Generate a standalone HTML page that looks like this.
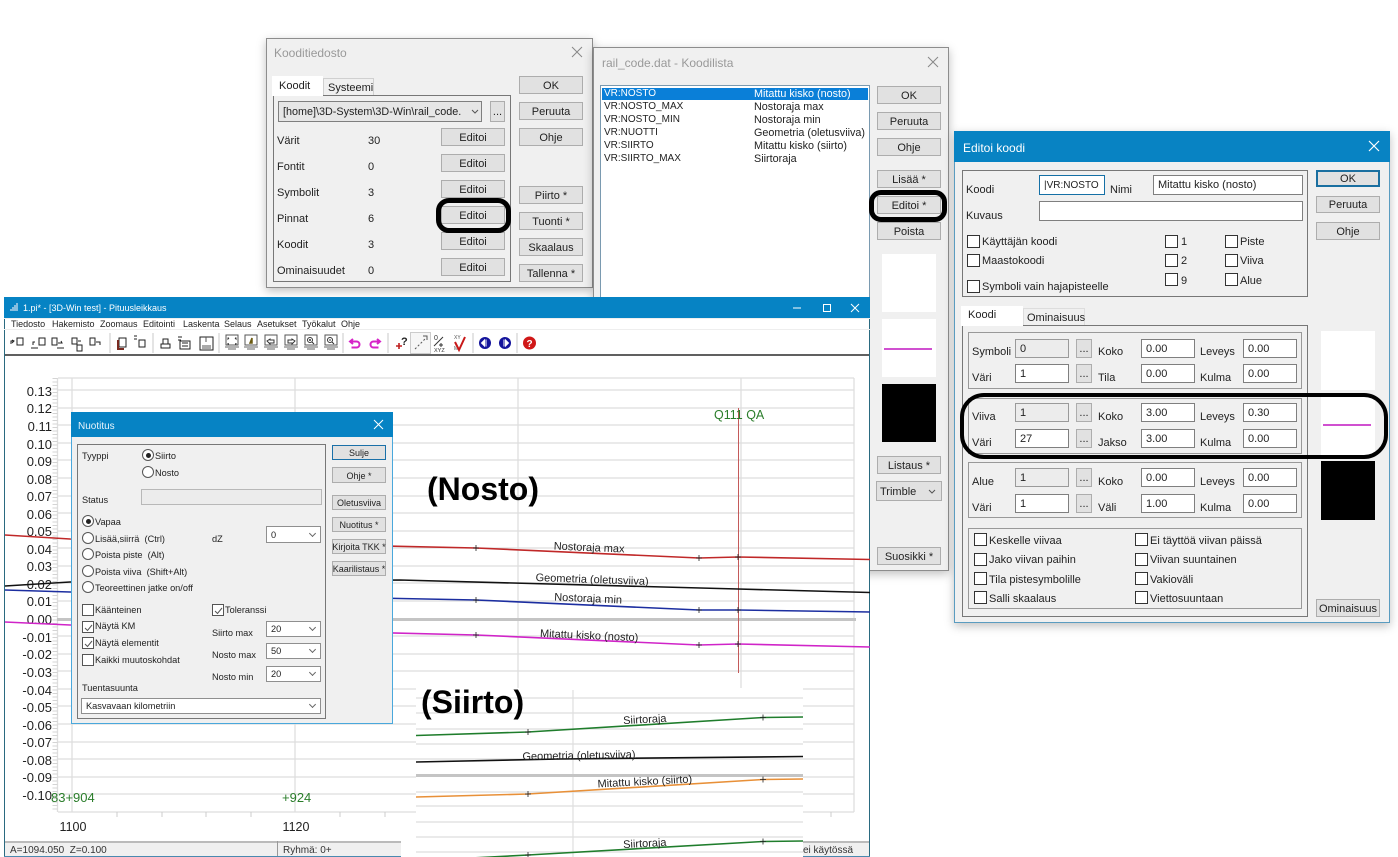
<!DOCTYPE html>
<html><head><meta charset="utf-8"><title>3D-Win</title>
<style>
html,body{margin:0;padding:0;background:#fff;width:1398px;height:857px;overflow:hidden}
body{position:relative;font:11px "Liberation Sans",sans-serif;color:#222}
div,span{position:absolute;box-sizing:border-box}
.t{white-space:pre;line-height:14px;height:14px;margin-top:1px}
.m0{margin-top:0}
.b{background:#e1e1e1;border:1px solid #adadad;text-align:center;white-space:pre;display:flex;align-items:center;justify-content:center;padding-top:1px}
.d{background:#f0f0f0;border:1px solid #8d8d8d;box-shadow:0 3px 9px rgba(0,0,0,.25)}
.g{border:1px solid #777}
.gl{border:1px solid #999}
.i{background:#fff;border:1px solid #7f7f7f;white-space:pre;padding-left:4px;display:flex;align-items:center}
.ig{background:#ececec;border:1px solid #9a9a9a;white-space:pre;padding-left:4px;display:flex;align-items:center}
.c{width:13px;height:13px;background:#fff;border:1px solid #333}
.ck{width:12px;height:12px;background:#fff;border:1px solid #555}
.ck svg{position:absolute;left:1px;top:1px}
.r{width:12px;height:12px;background:#fff;border:1px solid #555;border-radius:50%}
.r i{position:absolute;left:2.5px;top:2.5px;width:5px;height:5px;background:#222;border-radius:50%}
.ov{border:5px solid #000;background:transparent}
.tt{font-size:12px;color:#999;margin-top:0}
svg.f{position:absolute;left:0;top:0}
.cb{background:#fff;border:1px solid #8f8f8f;white-space:pre;padding-left:4px;display:flex;align-items:center;font-size:9.2px}
.cb:after{content:"";position:absolute;right:5px;top:50%;width:4px;height:4px;border-right:1px solid #666;border-bottom:1px solid #666;transform:translateY(-4px) rotate(45deg)}
.n{font-size:9.2px}
.b.n{font-size:9px}
.me{font-size:9px;margin-top:0}
</style></head><body>

<!-- Kooditiedosto -->
<div class="d" style="left:266px;top:38px;width:327px;height:250px"></div>
<div class="t tt" style="left:274px;top:46px">Kooditiedosto</div>
<svg class="f" width="1398" height="300" style="z-index:1"><path d="M572 47l10 10M582 47l-10 10M928 57l10 10M938 57l-10 10" stroke="#888" fill="none"/></svg>
<div class="t m0" style="left:323px;top:78px;width:51px;height:18px;background:#f0f0f0;border:1px solid #d0d0d0;padding:2px 0 0 4px">Systeemi</div>
<div class="g" style="left:273px;top:95px;width:238px;height:187px"></div>
<div class="t m0" style="left:272px;top:76px;width:51px;height:20px;background:#fff;padding:2px 0 0 7px;line-height:16px">Koodit</div>
<div class="i" style="left:278px;top:101px;width:204px;height:21px;background:#e6e6e6;font-size:10.8px">[home]\3D-System\3D-Win\rail_code.</div>
<svg class="f" width="500" height="120" style="z-index:1"><path d="M472 110l3 3 3-3" stroke="#555" fill="none"/></svg>
<div class="b" style="left:490px;top:101px;width:15px;height:21px">...</div>
<div class="t" style="left:277px;top:133px">Värit</div><div class="t" style="left:368px;top:133px">30</div>
<div class="t" style="left:277px;top:159px">Fontit</div><div class="t" style="left:368px;top:159px">0</div>
<div class="t" style="left:277px;top:185px">Symbolit</div><div class="t" style="left:368px;top:185px">3</div>
<div class="t" style="left:277px;top:211px">Pinnat</div><div class="t" style="left:368px;top:211px">6</div>
<div class="t" style="left:277px;top:237px">Koodit</div><div class="t" style="left:368px;top:237px">3</div>
<div class="t" style="left:277px;top:263px">Ominaisuudet</div><div class="t" style="left:368px;top:263px">0</div>
<div class="b" style="left:441px;top:128px;width:64px;height:18px">Editoi</div>
<div class="b" style="left:441px;top:154px;width:64px;height:18px">Editoi</div>
<div class="b" style="left:441px;top:180px;width:64px;height:18px">Editoi</div>
<div class="b" style="left:441px;top:206px;width:64px;height:18px">Editoi</div>
<div class="b" style="left:441px;top:232px;width:64px;height:18px">Editoi</div>
<div class="b" style="left:441px;top:258px;width:64px;height:18px">Editoi</div>
<div class="b" style="left:519px;top:76px;width:64px;height:18px">OK</div>
<div class="b" style="left:519px;top:102px;width:64px;height:18px">Peruuta</div>
<div class="b" style="left:519px;top:128px;width:64px;height:18px">Ohje</div>
<div class="b" style="left:519px;top:186px;width:64px;height:18px">Piirto *</div>
<div class="b" style="left:519px;top:212px;width:64px;height:18px">Tuonti *</div>
<div class="b" style="left:519px;top:238px;width:64px;height:18px">Skaalaus</div>
<div class="b" style="left:519px;top:264px;width:64px;height:18px">Tallenna *</div>
<div class="ov" style="left:436px;top:198px;width:75px;height:35px;border-radius:13px"></div>

<!-- Koodilista -->
<div class="d" style="left:593px;top:47px;width:356px;height:524px"></div>
<div class="t tt" style="left:602px;top:56px">rail_code.dat - Koodilista</div>
<div style="left:600px;top:85px;width:270px;height:215px;background:#fff;border:1px solid #7a9ab0"></div>
<div style="left:602px;top:88px;width:266px;height:12px;background:#0a7fd8"></div>
<div class="t m0" style="left:604px;top:87px;color:#fff;font-size:10px">VR:NOSTO</div><div class="t m0" style="left:754px;top:87px;color:#fff;font-size:10.8px">Mitattu kisko (nosto)</div>
<div class="t m0" style="left:604px;top:100px;font-size:10px">VR:NOSTO_MAX</div><div class="t m0" style="left:754px;top:100px;font-size:10.8px">Nostoraja max</div>
<div class="t m0" style="left:604px;top:113px;font-size:10px">VR:NOSTO_MIN</div><div class="t m0" style="left:754px;top:113px;font-size:10.8px">Nostoraja min</div>
<div class="t m0" style="left:604px;top:126px;font-size:10px">VR:NUOTTI</div><div class="t m0" style="left:754px;top:126px;font-size:10.8px">Geometria (oletusviiva)</div>
<div class="t m0" style="left:604px;top:139px;font-size:10px">VR:SIIRTO</div><div class="t m0" style="left:754px;top:139px;font-size:10.8px">Mitattu kisko (siirto)</div>
<div class="t m0" style="left:604px;top:152px;font-size:10px">VR:SIIRTO_MAX</div><div class="t m0" style="left:754px;top:152px;font-size:10.8px">Siirtoraja</div>
<div class="b" style="left:877px;top:86px;width:64px;height:18px">OK</div>
<div class="b" style="left:877px;top:112px;width:64px;height:18px">Peruuta</div>
<div class="b" style="left:877px;top:138px;width:64px;height:18px">Ohje</div>
<div class="b" style="left:877px;top:170px;width:64px;height:18px">Lisää *</div>
<div class="b" style="left:877px;top:196px;width:64px;height:18px">Editoi *</div>
<div class="b" style="left:877px;top:222px;width:64px;height:18px">Poista</div>
<div class="ov" style="left:869px;top:190px;width:78px;height:32px;border-radius:12px"></div>
<div style="left:882px;top:254px;width:54px;height:58px;background:#fff"></div>
<div style="left:882px;top:319px;width:54px;height:58px;background:#fff"></div>
<div style="left:884px;top:348px;width:48px;height:2px;background:#d050d0"></div>
<div style="left:882px;top:384px;width:54px;height:58px;background:#000"></div>
<div class="b" style="left:877px;top:456px;width:64px;height:18px">Listaus *</div>
<div class="b" style="left:876px;top:481px;width:66px;height:20px;justify-content:flex-start;padding-left:3px">Trimble</div>
<svg class="f" width="950" height="500" style="z-index:1"><path d="M929 490l3 3 3-3" stroke="#555" fill="none"/></svg>
<div class="b" style="left:877px;top:547px;width:64px;height:18px">Suosikki *</div>

<!-- Editoi koodi -->
<div class="d" style="left:954px;top:131px;width:436px;height:492px;border-color:#5a9cc0"></div>
<div style="left:954px;top:131px;width:436px;height:31px;background:#0883c3"></div>
<div class="t" style="left:963px;top:140px;color:#fff;font-size:12px">Editoi koodi</div>
<svg class="f" width="1398" height="170" style="z-index:1"><path d="M1369 141l10 10M1379 141l-10 10" stroke="#fff" stroke-width="1.2" fill="none"/></svg>
<div class="g" style="left:962px;top:170px;width:346px;height:127px"></div>
<div class="t" style="left:966px;top:182px">Koodi</div>
<div class="i" style="left:1039px;top:175px;width:66px;height:20px;border-color:#1570a6;font-size:10px">|VR:NOSTO</div>
<div class="t" style="left:1110px;top:182px">Nimi</div>
<div class="i" style="left:1153px;top:175px;width:150px;height:20px">Mitattu kisko (nosto)</div>
<div class="t" style="left:966px;top:208px">Kuvaus</div>
<div class="i" style="left:1039px;top:201px;width:264px;height:20px"></div>
<div class="c" style="left:967px;top:235px"></div><div class="t" style="left:982px;top:234px">Käyttäjän koodi</div>
<div class="c" style="left:967px;top:254px"></div><div class="t" style="left:982px;top:253px">Maastokoodi</div>
<div class="c" style="left:967px;top:280px"></div><div class="t" style="left:982px;top:279px">Symboli vain hajapisteelle</div>
<div class="c" style="left:1165px;top:235px"></div><div class="t" style="left:1181px;top:234px">1</div>
<div class="c" style="left:1165px;top:254px"></div><div class="t" style="left:1181px;top:253px">2</div>
<div class="c" style="left:1165px;top:273px"></div><div class="t" style="left:1181px;top:273px">9</div>
<div class="c" style="left:1225px;top:235px"></div><div class="t" style="left:1240px;top:234px">Piste</div>
<div class="c" style="left:1225px;top:254px"></div><div class="t" style="left:1240px;top:253px">Viiva</div>
<div class="c" style="left:1225px;top:273px"></div><div class="t" style="left:1240px;top:273px">Alue</div>
<div class="b" style="left:1316px;top:170px;width:64px;height:17px;border:2px solid #1a6fa0">OK</div>
<div class="b" style="left:1316px;top:196px;width:64px;height:17px">Peruuta</div>
<div class="b" style="left:1316px;top:222px;width:64px;height:18px">Ohje</div>
<div class="t m0" style="left:1023px;top:308px;width:62px;height:18px;background:#f0f0f0;border:1px solid #ddd;padding:2px 0 0 3px">Ominaisuus</div>
<div class="g" style="left:962px;top:325px;width:346px;height:292px"></div>
<div class="t m0" style="left:961px;top:306px;width:62px;height:20px;background:#fff;padding:2px 0 0 7px;line-height:14px">Koodi</div>

<div class="gl" style="left:968px;top:332px;width:334px;height:57px"></div>
<div class="t" style="left:972px;top:344px">Symboli</div><div class="ig" style="left:1015px;top:339px;width:54px;height:19px">0</div><div class="b" style="left:1076px;top:339px;width:16px;height:19px">...</div>
<div class="t" style="left:1098px;top:344px">Koko</div><div class="i" style="left:1141px;top:339px;width:54px;height:19px">0.00</div>
<div class="t" style="left:1200px;top:344px">Leveys</div><div class="i" style="left:1243px;top:339px;width:54px;height:19px">0.00</div>
<div class="t" style="left:972px;top:370px">Väri</div><div class="i" style="left:1015px;top:364px;width:54px;height:19px">1</div><div class="b" style="left:1076px;top:364px;width:16px;height:19px">...</div>
<div class="t" style="left:1098px;top:370px">Tila</div><div class="i" style="left:1141px;top:364px;width:54px;height:19px">0.00</div>
<div class="t" style="left:1200px;top:370px">Kulma</div><div class="i" style="left:1243px;top:364px;width:54px;height:19px">0.00</div>

<div class="gl" style="left:968px;top:398px;width:334px;height:56px"></div>
<div class="t" style="left:972px;top:409px">Viiva</div><div class="ig" style="left:1015px;top:403px;width:54px;height:19px">1</div><div class="b" style="left:1076px;top:403px;width:16px;height:19px">...</div>
<div class="t" style="left:1098px;top:409px">Koko</div><div class="i" style="left:1141px;top:403px;width:54px;height:19px">3.00</div>
<div class="t" style="left:1200px;top:409px">Leveys</div><div class="i" style="left:1243px;top:403px;width:54px;height:19px">0.30</div>
<div class="t" style="left:972px;top:435px">Väri</div><div class="i" style="left:1015px;top:429px;width:54px;height:19px">27</div><div class="b" style="left:1076px;top:429px;width:16px;height:19px">...</div>
<div class="t" style="left:1098px;top:435px">Jakso</div><div class="i" style="left:1141px;top:429px;width:54px;height:19px">3.00</div>
<div class="t" style="left:1200px;top:435px">Kulma</div><div class="i" style="left:1243px;top:429px;width:54px;height:19px">0.00</div>

<div class="gl" style="left:968px;top:462px;width:334px;height:56px"></div>
<div class="t" style="left:972px;top:474px">Alue</div><div class="ig" style="left:1015px;top:468px;width:54px;height:19px">1</div><div class="b" style="left:1076px;top:468px;width:16px;height:19px">...</div>
<div class="t" style="left:1098px;top:474px">Koko</div><div class="i" style="left:1141px;top:468px;width:54px;height:19px">0.00</div>
<div class="t" style="left:1200px;top:474px">Leveys</div><div class="i" style="left:1243px;top:468px;width:54px;height:19px">0.00</div>
<div class="t" style="left:972px;top:500px">Väri</div><div class="i" style="left:1015px;top:494px;width:54px;height:19px">1</div><div class="b" style="left:1076px;top:494px;width:16px;height:19px">...</div>
<div class="t" style="left:1098px;top:500px">Väli</div><div class="i" style="left:1141px;top:494px;width:54px;height:19px">1.00</div>
<div class="t" style="left:1200px;top:500px">Kulma</div><div class="i" style="left:1243px;top:494px;width:54px;height:19px">0.00</div>

<div class="gl" style="left:968px;top:528px;width:334px;height:81px"></div>
<div class="c" style="left:974px;top:533px"></div><div class="t" style="left:989px;top:533px">Keskelle viivaa</div>
<div class="c" style="left:974px;top:553px"></div><div class="t" style="left:989px;top:552px">Jako viivan paihin</div>
<div class="c" style="left:974px;top:572px"></div><div class="t" style="left:989px;top:572px">Tila pistesymbolille</div>
<div class="c" style="left:974px;top:591px"></div><div class="t" style="left:989px;top:591px">Salli skaalaus</div>
<div class="c" style="left:1135px;top:533px"></div><div class="t" style="left:1150px;top:533px">Ei täyttöä viivan päissä</div>
<div class="c" style="left:1135px;top:553px"></div><div class="t" style="left:1150px;top:552px">Viivan suuntainen</div>
<div class="c" style="left:1135px;top:572px"></div><div class="t" style="left:1150px;top:572px">Vakioväli</div>
<div class="c" style="left:1135px;top:591px"></div><div class="t" style="left:1150px;top:591px">Viettosuuntaan</div>
<div style="left:1321px;top:331px;width:54px;height:59px;background:#fff"></div>
<div style="left:1321px;top:397px;width:54px;height:59px;background:#fff"></div>
<div style="left:1323px;top:424px;width:48px;height:2px;background:#d050d0"></div>
<div style="left:1321px;top:461px;width:54px;height:59px;background:#000"></div>
<div class="b" style="left:1316px;top:599px;width:64px;height:18px">Ominaisuus</div>
<div class="ov" style="left:960px;top:393px;width:428px;height:66px;border-radius:24px;border-width:4px"></div>

<!-- Main window -->
<div style="left:4px;top:297px;width:866px;height:560px;background:#fff;border-left:1px solid #2a6a80;border-right:1px solid #2a6a80"></div>
<div style="left:4px;top:297px;width:866px;height:21px;background:#0683c4"></div>
<div class="t m0" style="left:23px;top:301px;color:#fff;font-size:9px">1.pi* - [3D-Win test] - Pituusleikkaus</div>
<div class="t me" style="left:11px;top:317px">Tiedosto</div>
<div class="t me" style="left:52px;top:317px">Hakemisto</div>
<div class="t me" style="left:100px;top:317px">Zoomaus</div>
<div class="t me" style="left:143px;top:317px">Editointi</div>
<div class="t me" style="left:183px;top:317px">Laskenta</div>
<div class="t me" style="left:224px;top:317px">Selaus</div>
<div class="t me" style="left:257px;top:317px">Asetukset</div>
<div class="t me" style="left:302px;top:317px">Työkalut</div>
<div class="t me" style="left:341px;top:317px">Ohje</div>

<svg class="f" width="1398" height="857" style="pointer-events:none">
<defs><g id="m"><rect x="-6" y="-7" width="12" height="10" fill="#fff" stroke="#555"/><path d="M-7 5h14M-4 7h8" stroke="#999" stroke-width="1.5"/></g></defs>
<path d="M11 311v-2M13 311v-4M15 311v-6M17 311v-8" stroke="#cde" stroke-width="1.3"/>
<path d="M793 308h8" stroke="#fff"/><rect x="823.5" y="304.5" width="7" height="7" fill="none" stroke="#fff"/><path d="M851 304l8 8M859 304l-8 8" stroke="#fff"/>
<path d="M110 333v20M153 333v20M219 333v20M343 333v20M388 333v20M473 333v20M517 333v20" stroke="#c8c8c8"/>
<path d="M4 318.500h866M4 329.500h866" stroke="#eee"/>
<path d="M5 355h864" stroke="#000" stroke-width="1.3"/>
<g fill="none" stroke="#222">
<path d="M11 344v-3h3M12 340l2 1-2 2" /><rect x="17" y="338" width="6" height="7"/>
<path d="M31 348h7M33 345v-3h2" /><rect x="39" y="338" width="6" height="7"/>
<rect x="52" y="338" width="5" height="7"/><path d="M58 343h4l-1-2M57 348h7"/>
<rect x="72" y="338" width="5" height="6"/><path d="M78 341h3"/><rect x="77" y="345" width="5" height="6"/>
<rect x="90" y="338" width="5" height="7"/><path d="M96 342h4v3"/>
<rect x="119" y="338" width="7" height="9" fill="#fff"/><path d="M118 340v9h6" stroke="#7a2a20" stroke-width="2"/>
<rect x="139" y="340" width="6" height="7"/><path d="M134 336h3M134 339h3"/>
<path d="M161 344h9v4h-9zM163 344v-5h5v5"/>
<rect x="180" y="341" width="10" height="8"/><path d="M178 337h4M178 340h3M182 343h6M182 346h6"/>
<rect x="200" y="337" width="13" height="13"/><path d="M202 346h9M202 348h9M206 337v5" stroke="#555"/>
</g>
<use href="#m" x="232" y="342"/><use href="#m" x="251" y="342"/><use href="#m" x="271" y="342"/><use href="#m" x="291" y="342"/><use href="#m" x="311" y="342"/><use href="#m" x="331" y="342"/>
<g fill="none" stroke="#333"><path d="M229 338l-1 1v-1h1M235 338l1 1v-1h-1M229 344h-1v-1M236 343v1h-1"/><path d="M250 343l2-5v5z" stroke="#6a5a10" stroke-width="1.5"/><path d="M267 341l3-2v1h4v3h-4v1z"/><path d="M295 341l-3-2v1h-4v3h4v1z"/><circle cx="310" cy="340" r="2.500"/><path d="M312 342l2 2M309 340h2M310 339v2"/><circle cx="330" cy="340" r="2.500"/><path d="M332 342l2 2M329 340h2"/></g>
<g fill="none" stroke="#d624c8" stroke-width="2"><path d="M353 339l-3 2.500 3 2.500M350.500 341.500h6a2.800 2.800 0 0 1 0 6h-5"/><path d="M377 339l3 2.500-3 2.500M379.500 341.500h-6a2.800 2.800 0 0 0 0 6h5"/></g>
<path d="M396 346h6M399 343v6" stroke="#c02020" stroke-width="1.6"/>
<text x="401" y="345" font-size="11" font-weight="bold" fill="#222" font-family="Liberation Sans">?</text>
<rect x="410.500" y="332.500" width="20" height="21" fill="#f6f6f6" stroke="#ccc"/>
<path d="M415 349l11-11" stroke="#555" stroke-dasharray="2 2"/><path d="M423 336h4v4" stroke="#555" fill="none"/>
<text x="434" y="340" font-size="7" fill="#333" font-family="Liberation Sans">0</text><path d="M434 346l9-9" stroke="#333"/><path d="M441 343v4M439 345h4" stroke="#333"/>
<text x="434" y="352" font-size="5.500" fill="#333" font-family="Liberation Sans">XYZ</text>
<text x="454" y="339" font-size="5" fill="#555" font-family="Liberation Sans">XY</text><text x="454" y="350" font-size="5" fill="#555" font-family="Liberation Sans">M</text>
<path d="M455 342l4 8 6-13" stroke="#c81818" stroke-width="2" fill="none"/>
<circle cx="485" cy="343" r="6" fill="#14149c"/><path d="M486 339.500v7M484.500 340l-3 3 3 3z" stroke="#fff" fill="#fff"/>
<circle cx="505" cy="343" r="6" fill="#14149c"/><path d="M504 339.500v7M505.500 340l3 3-3 3z" stroke="#fff" fill="#fff"/>
<circle cx="529.500" cy="343" r="6.500" fill="#d01818"/>
<text x="526.500" y="347" font-size="10" font-weight="bold" fill="#fff" font-family="Liberation Sans">?</text>

<g stroke="#dedede" stroke-width="1.300" fill="none">
<path d="M58 378H854M58 390H854M58 408H854M58 425H854M58 443H854M58 460H854M58 478H854M58 496H854M58 513H854M58 531H854M58 548H854M58 566H854M58 583H854M58 601H854M58 636H854M58 654H854M58 671H854M58 689H854M58 706H854M58 724H854M58 742H854M58 759H854M58 777H854M58 794H854M58 812H854"/>
<path d="M57.500 378V812M72 378V812M295 378V812M518 378V812M741 378V812M854 378V812"/>
</g>
<path d="M55 378V812" stroke="#d4d4d4" stroke-width="5" stroke-dasharray="1 2.500"/>
<path d="M117 812v5M162 812v5M206 812v5M251 812v5M340 812v5M385 812v5M429 812v5M474 812v5M563 812v5M608 812v5M652 812v5M697 812v5M786 812v5M831 812v5" stroke="#ccc"/>
<path d="M57 619.500H856" stroke="#c4c4c4" stroke-width="3"/>
<path d="M738.500 408V673" stroke="#c45a5a" stroke-width="1"/>
<g font-family="Liberation Sans" font-size="13" fill="#222" text-anchor="end">
<text x="52" y="396">0.13</text><text x="52" y="413">0.12</text><text x="52" y="431">0.11</text><text x="52" y="449">0.10</text><text x="52" y="466">0.09</text><text x="52" y="484">0.08</text><text x="52" y="501">0.07</text><text x="52" y="519">0.06</text><text x="52" y="536">0.05</text><text x="52" y="554">0.04</text><text x="52" y="571">0.03</text><text x="52" y="589">0.02</text><text x="52" y="606">0.01</text><text x="52" y="624">0.00</text><text x="52" y="642">-0.01</text><text x="52" y="659">-0.02</text><text x="52" y="677">-0.03</text><text x="52" y="695">-0.04</text><text x="52" y="712">-0.05</text><text x="52" y="730">-0.06</text><text x="52" y="747">-0.07</text><text x="52" y="765">-0.08</text><text x="52" y="782">-0.09</text><text x="52" y="800">-0.10</text>
</g>
<g font-family="Liberation Sans" font-size="12.500" fill="#222" text-anchor="middle"><text x="73" y="831">1100</text><text x="296" y="831">1120</text></g>
<g font-family="Liberation Sans" font-size="13" fill="#2a7d2a"><text x="51" y="802">83+904</text><text x="282" y="802">+924</text><text x="714" y="419" font-size="12.500">Q111 QA</text></g>
<g fill="none" stroke-width="1.600">
<path d="M5 535L70 539L476 548L699 558L738 557L870 559.500" stroke="#c02828"/>
<path d="M5 586L70 582L400 580L738 589L870 592.500" stroke="#111"/>
<path d="M5 590L70 592L476 600L699 610L738 610L870 612" stroke="#1c2ea0"/>
<path d="M5 622L70 625L476 635L699 645L738 644L870 647" stroke="#d024c8"/>
</g>
<path d="M476 545v6M699 555v6M738 554v6M476 597v6M699 607v6M738 607v6M476 632v6M699 642v6M738 641v6M473 548h6M696 558h6M735 557h6M473 600h6M696 610h6M735 610h6M473 635h6M696 645h6M735 644h6" stroke="#222" stroke-width=".8"/>
<g font-family="Liberation Sans" font-size="11" fill="#222" text-anchor="middle">
<text x="589" y="551" transform="rotate(2.500 589 551)">Nostoraja max</text>
<text x="592" y="583" transform="rotate(2 592 583)">Geometria (oletusviiva)</text>
<text x="588" y="602" transform="rotate(2.500 588 602)">Nostoraja min</text>
<text x="589" y="639" transform="rotate(2.500 589 639)">Mitattu kisko (nosto)</text>
</g>
</svg>

<!-- status bar -->
<div style="left:5px;top:841px;width:864px;height:15px;background:#f0f0f0;border-top:2px solid #bbb"></div>
<div style="left:277px;top:841px;width:1px;height:15px;background:#999"></div>
<div class="t" style="left:10px;top:843px;font-size:10px;color:#333">A=1094.050  Z=0.100</div>
<div class="t" style="left:283px;top:843px;font-size:10px;color:#333">Ryhmä: 0+</div>
<div class="t" style="left:803px;top:843px;font-size:10px;color:#333">ei käytössä</div>
<div style="left:4px;top:856px;width:866px;height:1px;background:#4a8ab0"></div>

<!-- Nuotitus -->
<div style="left:71px;top:412px;width:322px;height:312px;background:#f0f0f0;border:1px solid #4aa8dc"></div>
<div style="left:71px;top:412px;width:322px;height:25px;background:#0683c4"></div>
<div class="t" style="left:78px;top:419px;color:#e8f4fb;font-size:10px">Nuotitus</div>
<svg class="f" width="400" height="440" style="z-index:1"><path d="M374 420l9 9M383 420l-9 9" stroke="#fff" fill="none"/></svg>
<div class="g" style="left:77px;top:444px;width:249px;height:275px"></div>
<div class="t n" style="left:82px;top:448px">Tyyppi</div>
<div class="r" style="left:142px;top:449px"><i></i></div><div class="t n" style="left:155px;top:448px">Siirto</div>
<div class="r" style="left:142px;top:466px"></div><div class="t n" style="left:155px;top:465px">Nosto</div>
<div class="t n" style="left:82px;top:492px">Status</div>
<div class="ig" style="left:141px;top:489px;width:181px;height:16px;border-color:#b8b8b8"></div>
<div class="r" style="left:82px;top:515px"><i></i></div><div class="t n" style="left:95px;top:514px">Vapaa</div>
<div class="r" style="left:82px;top:532px"></div><div class="t n" style="left:95px;top:531px">Lisää,siirrä  (Ctrl)</div>
<div class="r" style="left:82px;top:548px"></div><div class="t n" style="left:95px;top:547px">Poista piste  (Alt)</div>
<div class="r" style="left:82px;top:565px"></div><div class="t n" style="left:95px;top:564px">Poista viiva  (Shift+Alt)</div>
<div class="r" style="left:82px;top:581px"></div><div class="t n" style="left:95px;top:580px">Teoreettinen jatke on/off</div>
<div class="t n" style="left:212px;top:531px">dZ</div>
<div class="cb" style="left:266px;top:526px;width:55px;height:17px">0</div>
<div class="ck" style="left:82px;top:604px"></div><div class="t n" style="left:95px;top:602px">Käänteinen</div>
<div class="ck" style="left:82px;top:621px"><svg width="10" height="10"><path d="M1 5l2.500 2.500L8 2" stroke="#555" fill="none"/></svg></div><div class="t n" style="left:95px;top:618px">Näytä KM</div>
<div class="ck" style="left:82px;top:637px"><svg width="10" height="10"><path d="M1 5l2.500 2.500L8 2" stroke="#555" fill="none"/></svg></div><div class="t n" style="left:95px;top:635px">Näytä elementit</div>
<div class="ck" style="left:82px;top:654px"></div><div class="t n" style="left:95px;top:652px">Kaikki muutoskohdat</div>
<div class="ck" style="left:212px;top:604px"><svg width="10" height="10"><path d="M1 5l2.500 2.500L8 2" stroke="#555" fill="none"/></svg></div><div class="t n" style="left:225px;top:602px">Toleranssi</div>
<div class="t n" style="left:212px;top:625px">Siirto max</div><div class="cb" style="left:266px;top:621px;width:55px;height:16px">20</div>
<div class="t n" style="left:212px;top:647px">Nosto max</div><div class="cb" style="left:266px;top:643px;width:55px;height:16px">50</div>
<div class="t n" style="left:212px;top:669px">Nosto min</div><div class="cb" style="left:266px;top:666px;width:55px;height:16px">20</div>
<div class="t n" style="left:82px;top:680px">Tuentasuunta</div>
<div class="cb" style="left:81px;top:698px;width:240px;height:16px">Kasvavaan kilometriin</div>
<div class="b n" style="left:332px;top:445px;width:54px;height:15px;border:1.500px solid #1a70a8">Sulje</div>
<div class="b n" style="left:332px;top:467px;width:54px;height:16px">Ohje *</div>
<div class="b n" style="left:332px;top:495px;width:54px;height:15px">Oletusviiva</div>
<div class="b n" style="left:332px;top:517px;width:54px;height:15px">Nuotitus *</div>
<div class="b n" style="left:332px;top:539px;width:54px;height:15px">Kirjoita TKK *</div>
<div class="b n" style="left:332px;top:561px;width:54px;height:15px">Kaarilistaus *</div>

<!-- annotation -->
<div class="t m0" style="left:427px;top:471px;height:36px;line-height:36px;font-size:32px;font-weight:bold;color:#000">(Nosto)</div>

<!-- Siirto overlay -->
<div style="left:401px;top:841px;width:15px;height:16px;background:#fff"></div>
<div style="left:416px;top:688px;width:387px;height:169px;background:#fff"></div>
<svg class="f" width="1398" height="857" style="z-index:2">
<path d="M416 698H803M416 713H803M416 729H803M416 744H803M416 759H803M416 792H803M416 806H803M416 822H803M416 837H803M416 852H803M573 690V857" stroke="#dedede" stroke-width="1.200" fill="none"/>
<path d="M416 775.500H803" stroke="#c4c4c4" stroke-width="3"/>
<g fill="none" stroke-width="1.600">
<path d="M416 735.500L528 732L763 717.500L803 717" stroke="#1f7d2c"/>
<path d="M416 762L560 759L803 756.500" stroke="#111"/>
<path d="M416 797L528 794L763 779.500L803 779" stroke="#e89038"/>
<path d="M416 861L528 855L763 841.500L803 841" stroke="#1f7d2c"/>
</g>
<path d="M528 729v6M763 714.500v6M528 791v6M763 776.500v6M528 852v5M763 838.500v6M525 732h6M760 717.500h6M525 794h6M760 779.500h6M525 855h6M760 841.500h6" stroke="#222" stroke-width=".8"/>
<g font-family="Liberation Sans" font-size="11" fill="#222" text-anchor="middle">
<text x="645" y="723" transform="rotate(-3 645 723)">Siirtoraja</text>
<text x="579" y="759" transform="rotate(-1 579 759)">Geometria (oletusviiva)</text>
<text x="645" y="785" transform="rotate(-3 645 785)">Mitattu kisko (siirto)</text>
<text x="645" y="847" transform="rotate(-3 645 847)">Siirtoraja</text>
</g>
<text x="421" y="713" font-family="Liberation Sans" font-size="32" font-weight="bold" fill="#000">(Siirto)</text>
</svg>
</body></html>
